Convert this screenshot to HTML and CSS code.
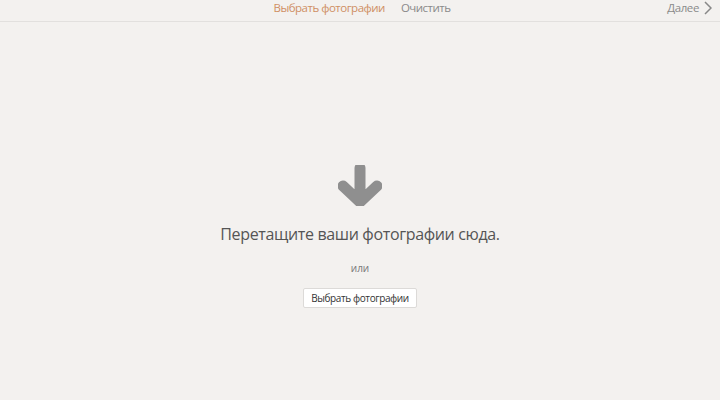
FILE: index.html
```html
<!DOCTYPE html>
<html lang="ru">
<head>
<meta charset="utf-8">
<link rel="stylesheet" href="styles.css">
</head>
<body>
<div class="page">
  <header class="topbar">
    <div class="spacer"></div>
    <nav class="tabs">
      <span class="tab active">Выбрать фотографии</span>
      <span class="tab">Очистить</span>
    </nav>
    <div class="next-wrap">
      <span class="next">Далее
        <svg class="chev" width="8" height="14" viewBox="0 0 8 14"><path d="M1 1 L7 7 L1 13" fill="none" stroke="#888" stroke-width="1.5"/></svg>
      </span>
    </div>
  </header>
  <main class="drop">
    <svg class="arrow" width="44" height="41" viewBox="0 0 44 41">
      <path d="M22 3 V36 M5 21 L22 37 L39 21" fill="none" stroke="#8f8f8f" stroke-width="11" stroke-linecap="round" stroke-linejoin="round"/>
    </svg>
    <h1 class="title">Перетащите ваши фотографии сюда.</h1>
    <p class="or">или</p>
    <button class="pick">Выбрать фотографии</button>
  </main>
</div>
</body>
</html>
```

FILE: styles.css
```css
html, body {
  margin: 0;
  padding: 0;
  background: #f3f1ef;
}
body {
  font-family: "Open Sans", "Noto Sans", sans-serif;
  width: 720px;
  height: 400px;
  overflow: hidden;
}
.page {
  display: flex;
  flex-direction: column;
  height: 400px;
}
.topbar {
  height: 21px;
  border-bottom: 1px solid #e2e0de;
  display: flex;
  align-items: center;
}
.spacer, .next-wrap {
  flex: 1;
}
.tabs {
  display: flex;
  gap: 16px;
  font-size: 11.5px;
  line-height: 14px;
  margin-top: -6px;
  margin-left: 4px;
}
.tab {
  color: #8a8a8a;
  letter-spacing: -0.5px;
}
.tab.active {
  color: #cf8f64;
}
.next-wrap {
  display: flex;
  justify-content: flex-end;
}
.next {
  display: flex;
  align-items: center;
  gap: 5px;
  color: #8a8a8a;
  font-size: 11.5px;
  margin-top: -6px;
  margin-right: 8px;
  letter-spacing: -0.4px;
}
.chev {
  display: block;
}
.drop {
  display: flex;
  flex-direction: column;
  align-items: center;
  padding-top: 143px;
}
.arrow {
  display: block;
  margin-left: -1px;
}
.title {
  margin: 17px 0 0;
  font-size: 16px;
  font-weight: 400;
  color: #555;
  line-height: 22px;
  letter-spacing: -0.35px;
}
.or {
  margin: 16px 0 0;
  font-size: 10px;
  color: #777;
  line-height: 14px;
}
.pick {
  margin-top: 13px;
  height: 20px;
  padding: 0 7px;
  background: #fff;
  border: 1px solid #dcdad8;
  border-radius: 2px;
  font-family: "Open Sans", "Noto Sans", sans-serif;
  font-size: 10px;
  color: #333;
  letter-spacing: -0.4px;
}
```
